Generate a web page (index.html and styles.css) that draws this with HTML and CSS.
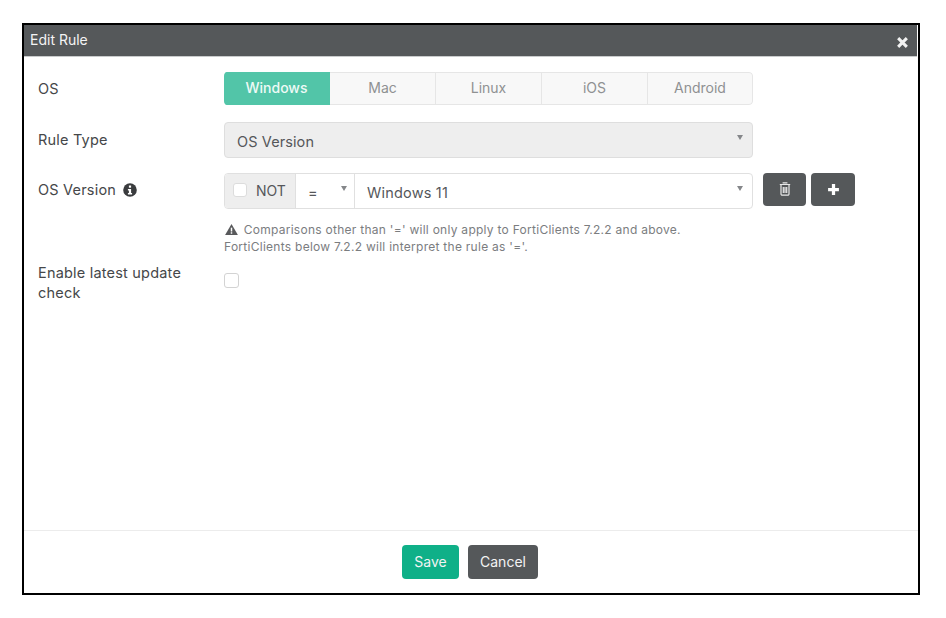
FILE: index.html
```html
<!DOCTYPE html>
<html lang="en">
<head>
<meta charset="utf-8">
<title>Edit Rule</title>
<link rel="stylesheet" href="styles.css">
</head>
<body>
<div class="dialog">
  <header class="head">
    <span class="title">Edit Rule</span>
    <svg class="close" viewBox="0 0 12 12" width="13" height="13"><path d="M2 2l8 8M10 2l-8 8" stroke="#f2f2f2" stroke-width="2.800" fill="none"/></svg>
  </header>
  <main class="body">
    <div class="row row-os">
      <div class="label">OS</div>
      <div class="tabs">
        <div class="tab active">Windows</div>
        <div class="tab">Mac</div>
        <div class="tab">Linux</div>
        <div class="tab">iOS</div>
        <div class="tab">Android</div>
      </div>
    </div>
    <div class="row row-type">
      <div class="label">Rule Type</div>
      <div class="select disabled"><span>OS Version</span><i class="caret"></i></div>
    </div>
    <div class="row row-ver">
      <div class="label">OS Version
        <svg class="info" viewBox="0 0 14 14" width="14" height="14"><circle cx="7" cy="7" r="6.800" fill="#3a3c3e"/><rect x="5.900" y="2.500" width="2.200" height="2.200" fill="#fff"/><path d="M4.900 6h3.200v4h1v1.400H4.900V10h1V7.400h-1z" fill="#fff"/></svg>
      </div>
      <div class="group">
        <div class="not"><span class="check"></span><span>NOT</span></div>
        <div class="op"><span>=</span><i class="caret"></i></div>
        <div class="val"><span>Windows 11</span><i class="caret"></i></div>
      </div>
      <div class="actions">
        <button class="icon-btn" type="button" aria-label="Delete">
          <svg viewBox="0 0 12 14" width="12" height="14"><path d="M4.200 1.500V.8h3.600v.7M.8 2.500h10.400M2 3v9a1.200 1.200 0 0 0 1.200 1.200h5.600A1.200 1.200 0 0 0 10 12V3M4.300 5v6M6 5v6M7.700 5v6" stroke="#e9e9e9" stroke-width="1.200" fill="none"/></svg>
        </button>
        <button class="icon-btn" type="button" aria-label="Add">
          <svg viewBox="0 0 12 12" width="13" height="13"><path d="M6 1v10M1 6h10" stroke="#fff" stroke-width="3" fill="none"/></svg>
        </button>
      </div>
    </div>
    <div class="note">
      <div><svg class="warn" viewBox="0 0 14 12" width="13" height="11"><path d="M7 0l7 12H0z" fill="#58595b"/><rect x="6.200" y="4" width="1.600" height="4.200" fill="#fff"/><rect x="6.200" y="9" width="1.600" height="1.600" fill="#fff"/></svg> Comparisons other than '=' will only apply to FortiClients 7.2.2 and above.</div>
      <div>FortiClients below 7.2.2 will interpret the rule as '='.</div>
    </div>
    <div class="row row-update">
      <div class="label label-wrap">Enable latest update check</div>
      <span class="check check-plain"></span>
    </div>
  </main>
  <footer class="foot">
    <button class="btn save" type="button">Save</button>
    <button class="btn cancel" type="button">Cancel</button>
  </footer>
</div>
</body>
</html>
```
FILE: styles.css
```css
* { box-sizing: border-box; }
html, body { margin: 0; padding: 0; background: #fff; }
body { padding: 23px 26px 0 22px; font-family: Inter, "Liberation Sans", sans-serif; color: #454749; }
.dialog { width: 898px; height: 572px; border: 2px solid #000; display: flex; flex-direction: column; background: #fff; }
.head { height: 32px; flex: none; background: #55585a; border-bottom: 1px solid #c9cbcc; display: flex; align-items: center; justify-content: space-between; padding: 0 8px 0 6px; margin-right: 1px; color: #f4f4f4; font-size: 14px; }
.title { position: relative; top: -1px; }
.close { margin-top: 4px; }
.body { flex: 1; padding: 15px 0 0 14px; }
.row { display: flex; align-items: flex-start; }
.label { width: 186px; flex: none; font-size: 14.500px; line-height: 20px; letter-spacing: .2px; }
.row-os { height: 33px; margin-bottom: 17px; }
.row-os .label { padding-top: 7px; }
.tabs { display: flex; width: 529px; height: 33px; border-radius: 4px; overflow: hidden; }
.tab { width: 106px; flex: none; display: flex; align-items: center; justify-content: center; padding-bottom: 2px; background: #f8f8f8; border: 1px solid #e6e6e6; border-left: 0; color: #8f9192; font-size: 14px; }
.tab:last-child { width: 105px; border-radius: 0 4px 4px 0; }
.tab.active { background: #52c5a8; border-color: #52c5a8; color: #eefaf6; font-weight: 500; }
.row-type { height: 36px; margin-bottom: 15px; }
.row-type .label { padding-top: 8px; }
.select { width: 529px; height: 36px; display: flex; align-items: center; justify-content: space-between; padding: 2px 9px 0 12px; border: 1px solid #dedede; border-radius: 4px; background: #eee; font-size: 14.500px; letter-spacing: .1px; color: #55575a; }
.caret { width: 0; height: 0; border: 3.500px solid transparent; border-top: 5px solid #85878a; border-bottom: 0; margin-bottom: 8px; }
.row-ver { height: 36px; }
.row-ver .label { display: flex; align-items: center; gap: 7px; height: 34px; }
.info { flex: none; }
.group { width: 529px; height: 36px; display: flex; border: 1px solid #e0e0e0; border-radius: 4px; font-size: 14.500px; letter-spacing: .2px; color: #55575a; }
.not { width: 71px; flex: none; display: flex; align-items: center; gap: 9px; padding: 0 0 2px 8px; background: #eee; border-right: 1px solid #e0e0e0; border-radius: 3px 0 0 3px; font-size: 14px; letter-spacing: 0; }
.check { display: block; width: 14px; height: 14px; flex: none; background: #fff; border: 1px solid #dcdcdc; border-radius: 3px; }
.op { width: 59px; flex: none; display: flex; align-items: center; justify-content: space-between; padding: 3px 7px 0 12px; border-right: 1px solid #e0e0e0; }
.val { flex: 1; display: flex; align-items: center; justify-content: space-between; padding: 3px 9px 0 12px; }
.actions { display: flex; gap: 5px; margin-left: 10px; }
.icon-btn { width: 43px; height: 33px; display: flex; align-items: center; justify-content: center; padding: 0 0 1px; border: 0; border-radius: 4px; background: #55585a; }
.icon-btn + .icon-btn { width: 44px; }
.note { margin: 12px 0 0 186px; font-size: 12px; line-height: 17px; letter-spacing: .27px; color: #7b7d7f; }
.warn { vertical-align: -1px; margin: 0 2px 0 1px; }
.row-update { margin-top: 8px; }
.label-wrap { width: 186px; padding-right: 30px; line-height: 19.500px; }
.check-plain { width: 15px; height: 15px; margin-top: 10px; border-color: #d3d3d3; }
.foot { height: 63px; flex: none; border-top: 1px solid #ececec; display: flex; justify-content: center; gap: 9px; padding: 14px 2px 0 0; }
.btn { height: 34px; border: 0; border-radius: 4px; font-family: inherit; font-size: 14px; padding: 0 0 2px; color: #f3f3f3; }
.save { width: 57px; background: #0fb088; }
.cancel { width: 70px; background: #55585a; }
```
